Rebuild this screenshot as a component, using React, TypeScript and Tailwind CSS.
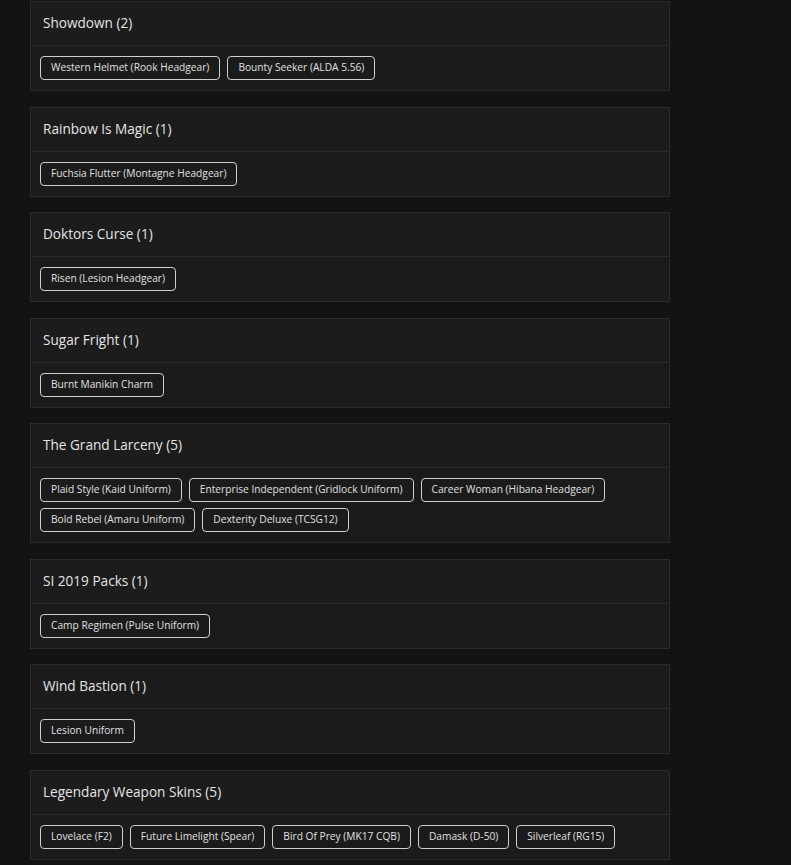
import React from "react";

type Bundle = { name: string; items: string[] };

const bundles: Bundle[] = [
  { name: "Showdown", items: ["Western Helmet (Rook Headgear)", "Bounty Seeker (ALDA 5.56)"] },
  { name: "Rainbow Is Magic", items: ["Fuchsia Flutter (Montagne Headgear)"] },
  { name: "Doktors Curse", items: ["Risen (Lesion Headgear)"] },
  { name: "Sugar Fright", items: ["Burnt Manikin Charm"] },
  {
    name: "The Grand Larceny",
    items: [
      "Plaid Style (Kaid Uniform)",
      "Enterprise Independent (Gridlock Uniform)",
      "Career Woman (Hibana Headgear)",
      "Bold Rebel (Amaru Uniform)",
      "Dexterity Deluxe (TCSG12)",
    ],
  },
  { name: "SI 2019 Packs", items: ["Camp Regimen (Pulse Uniform)"] },
  { name: "Wind Bastion", items: ["Lesion Uniform"] },
  {
    name: "Legendary Weapon Skins",
    items: [
      "Lovelace (F2)",
      "Future Limelight (Spear)",
      "Bird Of Prey (MK17 CQB)",
      "Damask (D-50)",
      "Silverleaf (RG15)",
    ],
  },
];

function BundleCard({ bundle }: { bundle: Bundle }) {
  return (
    <div className="mb-[15.5px] border border-[#2a2a2a] bg-[#1b1b1b]">
      <div className="flex h-[44px] items-center border-b border-[#2a2a2a] bg-[#1c1c1c] px-[12px]">
        <h3 className="text-[13.6px] font-medium text-[#e4e4e4]">
          {bundle.name} ({bundle.items.length})
        </h3>
      </div>
      <div className="flex flex-wrap gap-x-[7px] gap-y-[6px] px-[9px] py-[10px]">
        {bundle.items.map((item) => (
          <span
            key={item}
            className="flex h-[24px] items-center rounded-[4px] border border-[#cfcfcf] px-[10px] text-[10.2px] text-[#e0e0e0]"
          >
            {item}
          </span>
        ))}
      </div>
    </div>
  );
}

export default function App() {
  return (
    <div
      className="min-h-screen bg-[#131313] pt-[1px]"
      style={{ fontFamily: '"Open Sans", "Noto Sans", sans-serif' }}
    >
      <div className="ml-[30px] w-[640px]">
        {bundles.map((b) => (
          <BundleCard key={b.name} bundle={b} />
        ))}
      </div>
    </div>
  );
}
